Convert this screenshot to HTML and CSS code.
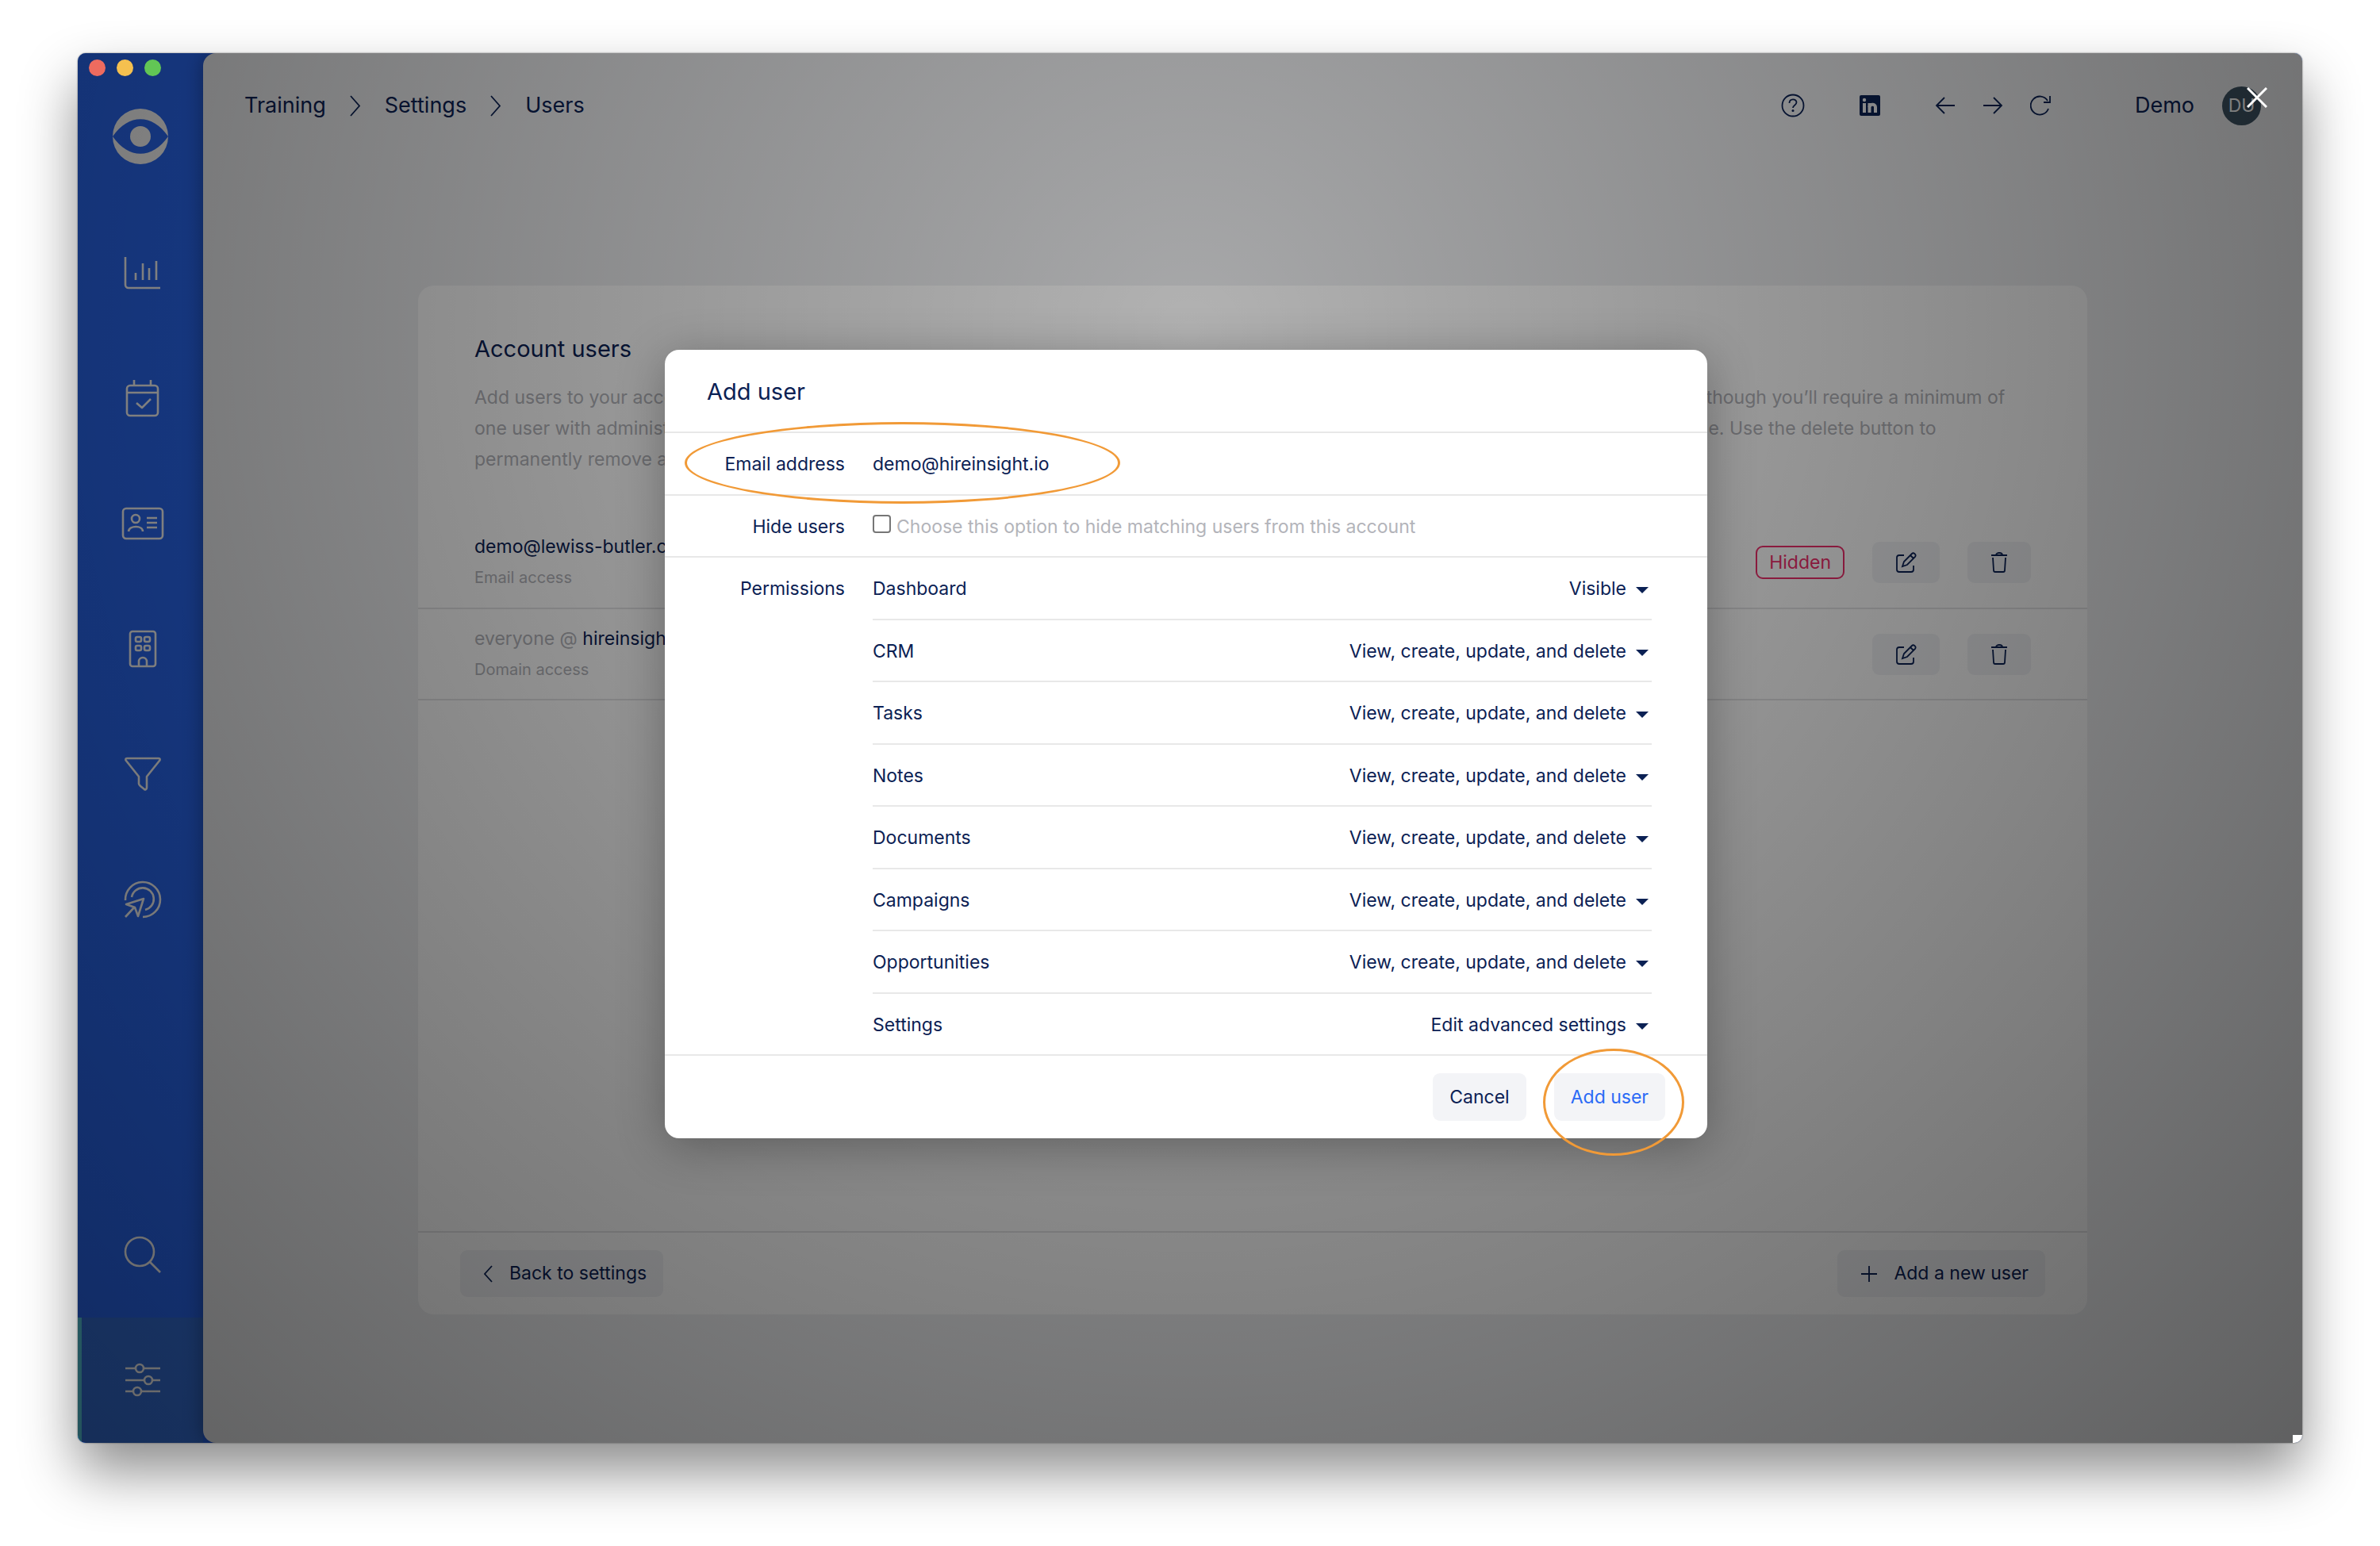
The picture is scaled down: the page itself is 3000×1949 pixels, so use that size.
FILE: index.html
```
<!DOCTYPE html>
<html lang="en">
<head>
    <meta charset="UTF-8">
    <meta name="viewport" content="width=device-width, initial-scale=1.0">
    <title>Settings - Users</title>
    <link rel="stylesheet" href="styles.css">
</head>
<body>
  <div class="window">
    <div class="traffic-lights">
      <span class="light red"></span>
      <span class="light yellow"></span>
      <span class="light green"></span>
    </div>

    <nav class="sidebar">
      <a class="logo" href="#" aria-label="Home">
        <svg width="70" height="70" viewBox="0 0 70 70" fill="#fff"><path d="M0 35a35 35 0 0 1 70 0C50 6 20 6 0 35zM0 35a35 35 0 0 0 70 0C50 64 20 64 0 35z"/><circle cx="35" cy="35" r="13"/></svg>
      </a>
      <a class="nav-item" href="#" aria-label="Dashboard">
        <svg class="nav-icon" viewBox="0 0 48 48"><path d="M2 4v35a4 4 0 0 0 4 4h40M15 24v9M24 12v21M32 18v15M41 9v24"/></svg>
      </a>
      <a class="nav-item" href="#" aria-label="Tasks">
        <svg class="nav-icon" viewBox="0 0 48 48"><rect x="4" y="8" width="39" height="38" rx="4"/><path d="M4 17h39M13 1v7M34 1v7M16 30l7 6 11-11"/></svg>
      </a>
      <a class="nav-item" href="#" aria-label="Contacts">
        <svg class="nav-icon wide" viewBox="0 0 54 48"><rect x="2" y="5" width="50" height="38" rx="4"/><circle cx="18" cy="18" r="5"/><path d="M9 34c1-8 18-8 18 0M32 17h13M32 23h13M32 29h13"/></svg>
      </a>
      <a class="nav-item" href="#" aria-label="Companies">
        <svg class="nav-icon" viewBox="0 0 48 48"><rect x="8" y="2" width="32" height="44" rx="3"/><rect x="15" y="9" width="7" height="6" rx="2"/><rect x="26" y="9" width="7" height="6" rx="2"/><rect x="15" y="20" width="7" height="6" rx="2"/><rect x="26" y="20" width="7" height="6" rx="2"/><path d="M19 46v-6a5 5 0 0 1 10 0v6"/></svg>
      </a>
      <a class="nav-item" href="#" aria-label="Pipeline">
        <svg class="nav-icon" viewBox="0 0 48 48"><path d="M4 4h40c2 0 2 2 1 3L29 27v14c0 2-2 3-3 2l-5-4c-1-1-2-2-2-3v-9L3 7C2 6 2 4 4 4z"/></svg>
      </a>
      <a class="nav-item" href="#" aria-label="Campaigns">
        <svg class="nav-icon" viewBox="0 0 48 48"><path d="M2 25A22 22 0 1 1 24 46M10 21a14 14 0 1 1 17 16M2 46l12-13M3 30l22-7-7 22-4-11z"/></svg>
      </a>
      <a class="nav-item nav-bottom" href="#" aria-label="Search">
        <svg class="nav-icon" viewBox="0 0 48 48"><circle cx="20" cy="20" r="18"/><path d="M33 33l13 13"/></svg>
      </a>
      <a class="nav-item active" href="#" aria-label="Settings">
        <svg class="nav-icon" viewBox="0 0 48 48"><circle cx="20" cy="9" r="5"/><circle cx="31" cy="24" r="5"/><circle cx="17" cy="38" r="5"/><path d="M2 9h13M25 9h21M2 24h24M36 24h10M2 38h10M22 38h24"/></svg>
      </a>
    </nav>

    <main class="main">
      <header class="topbar">
        <nav class="breadcrumb">
          <a href="#">Training</a>
          <svg width="14" height="27" viewBox="0 0 14 27"><path d="M1 1l11 12.500L1 26"/></svg>
          <a href="#">Settings</a>
          <svg width="14" height="27" viewBox="0 0 14 27"><path d="M1 1l11 12.500L1 26"/></svg>
          <a href="#">Users</a>
        </nav>
        <div class="tools">
          <button class="icon-button" aria-label="Help">
            <svg width="30" height="30" viewBox="0 0 30 30"><circle cx="15" cy="15" r="13.500"/><path d="M10.500 12c0-6 9-6 9-1 0 4-4.500 3.500-4.500 7"/><circle class="dot" cx="15" cy="21.500" r="1.500"/></svg>
          </button>
          <button class="icon-button" aria-label="LinkedIn">
            <svg width="26" height="26" viewBox="0 0 26 26"><rect class="solid" width="26" height="26" rx="2"/><g class="cutout"><circle cx="6" cy="6" r="2.200"/><rect x="4" y="10" width="4" height="12"/><rect x="10.500" y="10" width="4" height="12"/><path d="M12.500 15c0-4.500 7.500-4.500 7.500 0v7"/></g></svg>
          </button>
          <div class="history">
            <button class="icon-button" aria-label="Back">
              <svg width="26" height="26" viewBox="0 0 26 26"><path d="M25 13H2M12 3L2 13l10 10"/></svg>
            </button>
            <button class="icon-button" aria-label="Forward">
              <svg width="26" height="26" viewBox="0 0 26 26"><path d="M1 13h23M14 3l10 10-10 10"/></svg>
            </button>
            <button class="icon-button" aria-label="Reload">
              <svg width="26" height="26" viewBox="0 0 26 26"><path d="M23 17A11.500 11.500 0 1 1 22 7M25 1v8h-8"/></svg>
            </button>
          </div>
        </div>
        <span class="account-name">Demo</span>
        <span class="avatar">DU</span>
      </header>

      <section class="card">
        <div class="card-head">
          <h1>Account users</h1>
          <p>Add users to your account by entering their email address or the domain name. You can add as many users as you need to this account now, although you’ll require a minimum of<br>
          one user with administrative access. You can hide any of those users you no longer want to see from this account, by quickly changing their role. Use the delete button to<br>
          permanently remove a user.</p>
        </div>
        <table class="users">
          <tr>
            <td>
              <div class="user-name">demo@lewiss-butler.com</div>
              <div class="user-type">Email access</div>
            </td>
            <td>
              <div class="actions">
                <span class="badge">Hidden</span>
                <button class="button edit" aria-label="Edit">
                  <svg width="26" height="26" viewBox="0 0 26 26"><path d="M10 4H4a3 3 0 0 0-3 3v15a3 3 0 0 0 3 3h15a3 3 0 0 0 3-3v-5M8 18l2-6L20 2c2-2 6 1 4 4L14 16zM18 4l4 4"/></svg>
                </button>
                <button class="button delete" aria-label="Delete">
                  <svg width="22" height="26" viewBox="0 0 22 26"><path d="M1 4h20M7 4c0-4 8-4 8 0M3 7l1 16c0 1 1 2 2 2h10c1 0 2-1 2-2l1-16"/></svg>
                </button>
              </div>
            </td>
          </tr>
          <tr>
            <td>
              <div class="user-name"><span class="muted">everyone @</span> hireinsight.io</div>
              <div class="user-type">Domain access</div>
            </td>
            <td>
              <div class="actions">
                <button class="button edit" aria-label="Edit">
                  <svg width="26" height="26" viewBox="0 0 26 26"><path d="M10 4H4a3 3 0 0 0-3 3v15a3 3 0 0 0 3 3h15a3 3 0 0 0 3-3v-5M8 18l2-6L20 2c2-2 6 1 4 4L14 16zM18 4l4 4"/></svg>
                </button>
                <button class="button delete" aria-label="Delete">
                  <svg width="22" height="26" viewBox="0 0 22 26"><path d="M1 4h20M7 4c0-4 8-4 8 0M3 7l1 16c0 1 1 2 2 2h10c1 0 2-1 2-2l1-16"/></svg>
                </button>
              </div>
            </td>
          </tr>
        </table>
        <footer class="card-footer">
          <button class="button large">
            <svg width="11" height="22" viewBox="0 0 11 22"><path d="M10 1L1 11l9 10"/></svg>
            Back to settings
          </button>
          <button class="button large">
            <svg width="20" height="20" viewBox="0 0 20 20"><path d="M10 0v20M0 10h20"/></svg>
            Add a new user
          </button>
        </footer>
      </section>
    </main>

    <div class="overlay">
      <button class="close" aria-label="Close">
        <svg width="26" height="26" viewBox="0 0 26 26"><path d="M1 1l24 24M25 1L1 25"/></svg>
      </button>

      <form class="modal">
        <h2>Add user</h2>
        <div class="field">
          <label class="field-label" for="email">Email address</label>
          <input class="email" type="text" id="email" value="demo@hireinsight.io">
        </div>
        <div class="field">
          <label class="field-label" for="hide">Hide users</label>
          <div class="check">
            <input type="checkbox" id="hide">
            <span class="muted">Choose this option to hide matching users from this account</span>
          </div>
        </div>
        <div class="field permissions">
          <span class="field-label">Permissions</span>
          <div class="permission-list">
            <div class="permission">
              <label for="p-dashboard">Dashboard</label>
              <select id="p-dashboard"><option>Visible</option></select>
              <svg class="caret" viewBox="0 0 16 8"><path d="M0 0h16L8 8z"/></svg>
            </div>
            <div class="permission">
              <label for="p-crm">CRM</label>
              <select id="p-crm"><option>View, create, update, and delete</option></select>
              <svg class="caret" viewBox="0 0 16 8"><path d="M0 0h16L8 8z"/></svg>
            </div>
            <div class="permission">
              <label for="p-tasks">Tasks</label>
              <select id="p-tasks"><option>View, create, update, and delete</option></select>
              <svg class="caret" viewBox="0 0 16 8"><path d="M0 0h16L8 8z"/></svg>
            </div>
            <div class="permission">
              <label for="p-notes">Notes</label>
              <select id="p-notes"><option>View, create, update, and delete</option></select>
              <svg class="caret" viewBox="0 0 16 8"><path d="M0 0h16L8 8z"/></svg>
            </div>
            <div class="permission">
              <label for="p-documents">Documents</label>
              <select id="p-documents"><option>View, create, update, and delete</option></select>
              <svg class="caret" viewBox="0 0 16 8"><path d="M0 0h16L8 8z"/></svg>
            </div>
            <div class="permission">
              <label for="p-campaigns">Campaigns</label>
              <select id="p-campaigns"><option>View, create, update, and delete</option></select>
              <svg class="caret" viewBox="0 0 16 8"><path d="M0 0h16L8 8z"/></svg>
            </div>
            <div class="permission">
              <label for="p-opportunities">Opportunities</label>
              <select id="p-opportunities"><option>View, create, update, and delete</option></select>
              <svg class="caret" viewBox="0 0 16 8"><path d="M0 0h16L8 8z"/></svg>
            </div>
            <div class="permission">
              <label for="p-settings">Settings</label>
              <select id="p-settings"><option>Edit advanced settings</option></select>
              <svg class="caret" viewBox="0 0 16 8"><path d="M0 0h16L8 8z"/></svg>
            </div>
          </div>
        </div>
        <div class="modal-footer">
          <button type="button" class="modal-button">Cancel</button>
          <button type="button" class="modal-button primary">Add user</button>
        </div>
        <span class="highlight highlight-email"></span>
        <span class="highlight highlight-add"></span>
      </form>
    </div>
    <span class="scroll-corner"></span>
  </div>
</body>
</html>
```
FILE: styles.css
```
* {
    box-sizing: border-box;
}
body {
    display: flex;
    min-height: 100vh;
    margin: 0;
    padding: 67px 98px 130px;
    background-color: #fff;
    color: #0b2154;
    font-family: Inter, "Liberation Sans", sans-serif;
    font-size: 23px;
    line-height: 1.5;
}
a {
    color: inherit;
    text-decoration: none;
}
button, input, select {
    font: inherit;
    color: inherit;
}
button {
    padding: 0;
    border: none;
    cursor: pointer;
}
svg {
    display: block;
    fill: none;
    stroke: currentColor;
    stroke-width: 1.8;
}
.muted {
    color: #b3b4ba;
}

/* window frame */
.window {
    position: relative;
    display: flex;
    flex: 1;
    border-radius: 10px;
    background-color: #2a6af6;
    box-shadow: 0 0 2px rgba(0, 0, 0, 0.6), 0 36px 70px rgba(0, 0, 0, 0.45);
    overflow: hidden;
}
.traffic-lights {
    position: absolute;
    top: 8px;
    left: 14px;
    z-index: 2;
    display: flex;
    gap: 14px;
}
.light {
    width: 21px;
    height: 21px;
    border-radius: 50%;
}
.red {
    background-color: #ed6b5f;
}
.yellow {
    background-color: #f5c04f;
}
.green {
    background-color: #62c655;
}
.scroll-corner {
    position: absolute;
    right: 0;
    bottom: 0;
    z-index: 2;
    width: 12px;
    height: 10px;
    background-color: #fff;
}

/* sidebar */
.sidebar {
    display: flex;
    flex-direction: column;
    width: 158px;
    color: #fff;
}
.logo {
    display: flex;
    justify-content: center;
    height: 198px;
    padding-top: 70px;
}
.logo svg {
    stroke: none;
    fill: #fff;
}
.nav-item {
    display: flex;
    align-items: center;
    justify-content: center;
    height: 158px;
}
.nav-icon {
    width: 48px;
    height: 48px;
    margin-left: 6px;
    stroke-width: 2.6;
    stroke-linejoin: round;
}
.nav-icon.wide {
    width: 54px;
}
.nav-bottom {
    margin-top: auto;
}
.active {
    background-color: #3672dd;
    border-left: 5px solid #58d1e6;
}
.active .nav-icon {
    margin-left: 1px;
}

/* main area */
.main {
    display: flex;
    flex-direction: column;
    flex: 1;
    border-radius: 16px 0 0 16px;
    background-color: #f0f1f3;
    box-shadow: 0 0 24px rgba(0, 0, 0, 0.35);
}
.topbar {
    display: flex;
    align-items: center;
    height: 130px;
    padding: 2px 52px 0 52px;
    font-size: 27px;
}
.breadcrumb {
    display: flex;
    align-items: center;
    gap: 30px;
    margin-right: auto;
}
.tools {
    display: flex;
    align-items: center;
    gap: 69px;
}
.history {
    display: flex;
    gap: 34px;
}
.icon-button {
    background: none;
}
.dot, .solid {
    fill: currentColor;
    stroke: none;
}
.cutout circle, .cutout rect {
    fill: #f0f1f3;
    stroke: none;
}
.cutout path {
    stroke: #f0f1f3;
    stroke-width: 4;
}
.account-name {
    margin: 0 35px 0 106px;
}
.avatar {
    width: 49px;
    height: 49px;
    border-radius: 50%;
    background-color: #3e5464;
    color: #fff;
    font-size: 23px;
    line-height: 49px;
    text-align: center;
}

/* account users card */
.card {
    display: flex;
    flex-direction: column;
    flex: 1;
    margin: 163px 271px 162px;
    border-radius: 20px;
    background-color: #fff;
}
.card-head {
    padding: 60px 71px 53px;
}
h1, h2 {
    margin: 0;
    font-size: 29px;
    font-weight: 400;
}
h1 {
    margin-bottom: 23px;
    line-height: 39px;
}
.card-head p {
    margin: 0;
    color: #b3b4ba;
    line-height: 39px;
    white-space: nowrap;
}
.users {
    width: 100%;
    border-collapse: collapse;
}
.users td {
    height: 115px;
    padding: 0 71px;
    border-bottom: 2px solid #e4e4e6;
}
.user-name, .user-type {
    line-height: 39px;
}
.user-type {
    color: #b3b4ba;
    font-size: 20px;
}
.actions {
    display: flex;
    align-items: center;
    justify-content: flex-end;
    gap: 35px;
}
.badge {
    padding: 0 15px;
    border: 2px solid #ee2e6b;
    border-radius: 9px;
    color: #ee2e6b;
    line-height: 38px;
}
.button {
    display: flex;
    align-items: center;
    justify-content: center;
    height: 52px;
    border-radius: 9px;
    background-color: #f2f3f6;
}
.edit {
    width: 85px;
}
.delete {
    width: 80px;
}
.card-footer {
    display: flex;
    justify-content: space-between;
    margin-top: auto;
    padding: 22px 53px;
    border-top: 2px solid #e4e4e6;
}
.large {
    gap: 21px;
    height: 59px;
    padding: 0 21px 0 30px;
}

/* modal */
.overlay {
    position: absolute;
    inset: 0;
    z-index: 1;
    display: flex;
    align-items: center;
    justify-content: center;
    padding: 0 10px 10px 0;
    background: radial-gradient(circle at 50% 20%, rgba(0, 0, 0, 0.3), rgba(0, 0, 0, 0.6));
}
.close {
    position: absolute;
    top: 43px;
    right: 44px;
    background: none;
    color: #fff;
}
.close svg {
    stroke-width: 3;
}
.modal {
    position: relative;
    width: 1314px;
    border-radius: 18px;
    background-color: #fff;
    box-shadow: 0 10px 60px rgba(0, 0, 0, 0.3);
}
h2 {
    padding: 2px 53px 0;
    border-bottom: 2px solid #e8e8e8;
    line-height: 101px;
}
.field {
    display: flex;
    gap: 35px;
    padding: 22px 70px 20px 0;
    border-bottom: 2px solid #e8e8e8;
}
.field-label {
    width: 227px;
    text-align: right;
}
.email {
    flex: 1;
    padding: 0;
    border: none;
    outline: none;
}
.check {
    display: flex;
    gap: 7px;
}
.check input {
    width: 23px;
    height: 23px;
    margin: 2px 0 0;
    appearance: none;
    border: 2px solid #767676;
    border-radius: 4px;
}
.permissions {
    padding-top: 0;
    padding-bottom: 0;
}
.permissions > .field-label {
    padding-top: 22px;
}
.permission-list {
    flex: 1;
}
.permission {
    display: flex;
    align-items: center;
    padding: 22px 4px 20px 0;
    border-bottom: 2px solid #e8e8e8;
}
.permission:last-child {
    border-bottom: none;
}
.permission select {
    flex: 1;
    height: 34px;
    padding: 0;
    appearance: none;
    border: none;
    background: none;
    text-align: right;
    text-align-last: right;
}
.caret {
    width: 16px;
    height: 8px;
    margin: 4px 0 0 12px;
    fill: currentColor;
    stroke: none;
}
.modal-footer {
    display: flex;
    justify-content: flex-end;
    gap: 35px;
    padding: 22px 53px;
}
.modal-button {
    height: 60px;
    padding: 0 21px;
    border-radius: 9px;
    background-color: #f3f4f7;
}
.primary {
    color: #2a6af6;
}

/* orange rings drawn over the modal */
.highlight {
    position: absolute;
    border: 3px solid #f19a37;
    border-radius: 50%;
    pointer-events: none;
}
.highlight-email {
    top: 91px;
    left: 25px;
    width: 549px;
    height: 103px;
}
.highlight-add {
    right: 29px;
    bottom: -22px;
    width: 178px;
    height: 135px;
}
```
